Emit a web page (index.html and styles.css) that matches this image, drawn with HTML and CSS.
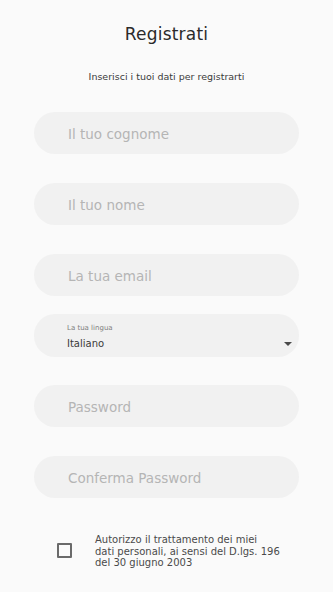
FILE: index.html
```html
<!DOCTYPE html>
<html lang="it">
<head>
<meta charset="utf-8">
<title>Registrati</title>
<link rel="stylesheet" href="styles.css">
</head>
<body>
<div class="page">
  <h1 class="title">Registrati</h1>
  <p class="subtitle">Inserisci i tuoi dati per registrarti</p>
  <form class="form">
    <div class="field f1"><span class="ph">Il tuo cognome</span></div>
    <div class="field f2"><span class="ph">Il tuo nome</span></div>
    <div class="field f3"><span class="ph">La tua email</span></div>
    <div class="select">
      <div class="sel-text">
        <span class="sel-label">La tua lingua</span>
        <span class="sel-value">Italiano</span>
      </div>
      <svg class="arrow" width="8" height="4" viewBox="0 0 8 4"><path d="M0 0 L8 0 L4 4 Z" fill="#4a4a4a"/></svg>
    </div>
    <div class="field f5"><span class="ph">Password</span></div>
    <div class="field f6"><span class="ph">Conferma Password</span></div>
    <div class="consent">
      <span class="checkbox"></span>
      <span class="consent-text">Autorizzo il trattamento dei miei<br>dati personali, ai sensi del D.lgs. 196<br>del 30 giugno 2003</span>
    </div>
  </form>
</div>
</body>
</html>
```

FILE: styles.css
```css
html, body {
  margin: 0;
  padding: 0;
  background: #fafafa;
}
body {
  font-family: "DejaVu Sans", sans-serif;
  color: #222;
}
.page {
  width: 333px;
  height: 592px;
  padding-top: 22px;
  box-sizing: border-box;
}
.title {
  margin: 0;
  font-size: 17px;
  font-weight: 400;
  line-height: 24px;
  text-align: center;
  color: #2a2a2a;
  letter-spacing: 0.2px;
}
.subtitle {
  margin: 24px 0 0;
  font-size: 9.5px;
  line-height: 14px;
  text-align: center;
  color: #3a3a3a;
}
.form {
  margin: 28px 34px 0;
  display: flex;
  flex-direction: column;
}
.field {
  height: 42px;
  border-radius: 21px;
  background: #f1f1f1;
  display: flex;
  align-items: center;
  padding-left: 34px;
}
.f2, .f3, .f6 { margin-top: 29px; }
.f5 { margin-top: 28px; }
.ph {
  font-size: 13.5px;
  color: #b5b5b5;
  padding-top: 1px;
}
.select {
  margin-top: 18px;
  height: 43px;
  border-radius: 21px;
  background: #f1f1f1;
  display: flex;
  align-items: center;
  padding: 0 7px 0 33px;
}
.sel-text {
  flex: 1;
  display: flex;
  flex-direction: column;
  padding-top: 2px;
}
.sel-label {
  font-size: 7px;
  line-height: 10px;
  color: #808080;
}
.sel-value {
  margin-top: 4px;
  font-size: 10px;
  line-height: 14px;
  color: #3a3a3a;
}
.arrow {
  margin-top: 17px;
}
.consent {
  margin-top: 35px;
  display: flex;
  align-items: center;
  padding-left: 23px;
}
.checkbox {
  width: 11px;
  height: 11px;
  border: 2px solid #6a6a6a;
  border-radius: 1px;
  flex: none;
}
.consent-text {
  margin-left: 23px;
  font-size: 10px;
  line-height: 11.5px;
  color: #4a4a4a;
  white-space: nowrap;
  padding-top: 1px;
}
```
